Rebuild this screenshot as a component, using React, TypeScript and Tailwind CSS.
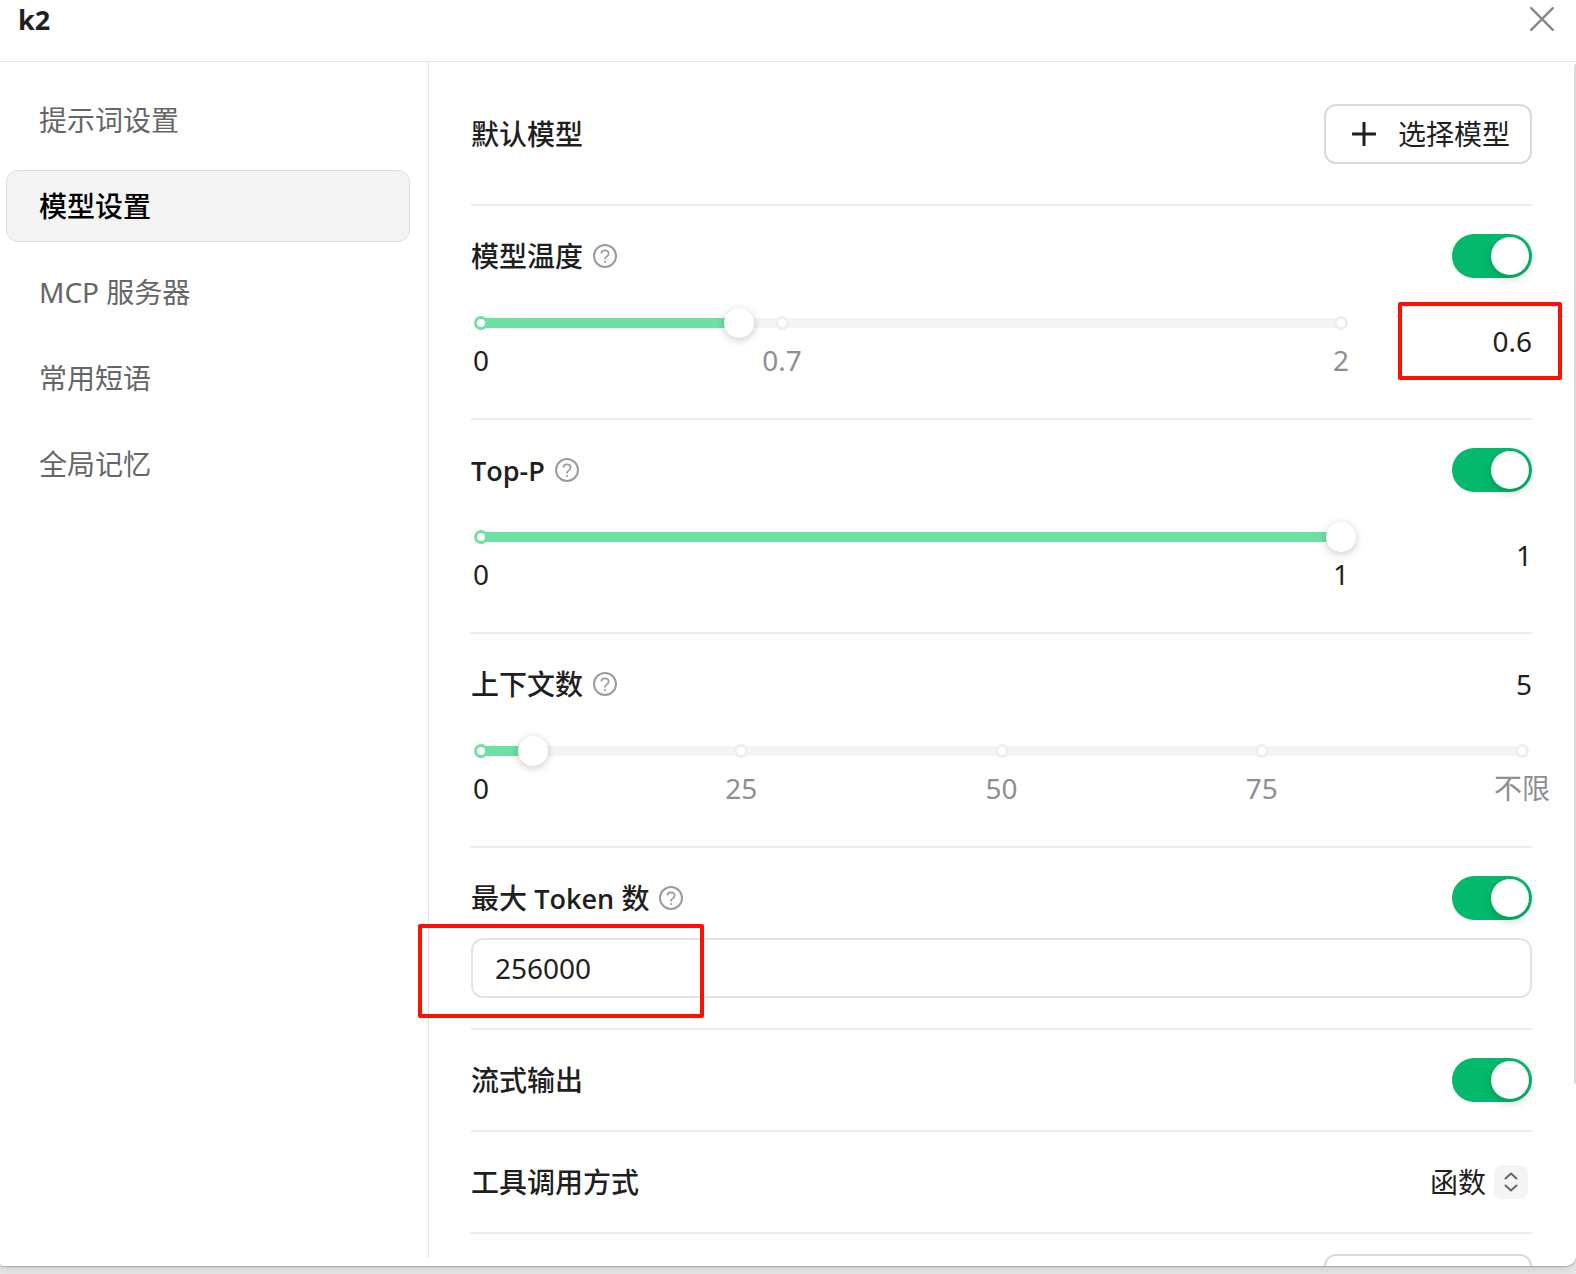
import { useState, type ReactNode } from "react";

const NAV = ["提示词设置", "模型设置", "MCP 服务器", "常用短语", "全局记忆"];

function HelpIcon() {
  return (
    <svg width="24" height="24" viewBox="0 0 24 24" fill="none" stroke="#9b9b9b" aria-hidden="true">
      <circle cx="12" cy="12" r="11" strokeWidth="2" />
      <path d="M8.4 9.6c0-1.9 1.5-3.3 3.6-3.3s3.6 1.3 3.6 3.2c0 1.4-.8 2.2-1.8 2.9-1.2.8-1.8 1.4-1.8 2.7v.4" strokeWidth="1.7" />
      <circle cx="12" cy="18" r="1.1" fill="#9b9b9b" stroke="none" />
    </svg>
  );
}

function Heading({ children, help }: { children: ReactNode; help?: boolean }) {
  return (
    <h2 className="flex h-11 items-center gap-[10px] text-[28px] leading-[44px] font-medium whitespace-nowrap">
      <span>{children}</span>
      {help && <HelpIcon />}
    </h2>
  );
}

function Latin({ children }: { children: ReactNode }) {
  return <span className="font-['Open_Sans',sans-serif] text-[27px] font-semibold">{children}</span>;
}

function Switch({ label }: { label: string }) {
  return (
    <input
      type="checkbox"
      role="switch"
      aria-label={label}
      defaultChecked
      className="relative h-11 w-20 shrink-0 cursor-pointer appearance-none rounded-full bg-gray-300 transition-colors before:absolute before:top-[3px] before:left-[3px] before:size-[38px] before:rounded-full before:bg-white before:shadow-[0_4px_8px_rgba(0,35,11,0.2)] before:transition-transform before:content-[''] checked:bg-[#04b96b] checked:before:translate-x-[36px]"
    />
  );
}

type Mark = { at: number; text: string };

function Slider({
  label,
  value,
  max,
  step,
  marks,
  onChange,
}: {
  label: string;
  value: number;
  max: number;
  step: number;
  marks: Mark[];
  onChange: (v: number) => void;
}) {
  return (
    <div className="h-[66px] flex-1 px-[10px] pt-[10px]">
      <div className="relative h-[10px] bg-[#f4f4f4]">
        <div className="h-full bg-[#6de0a3]" style={{ width: `${(value / max) * 100}%` }} />
        {marks.map((m) => (
          <span
            key={m.at}
            className={`absolute top-1/2 size-[14px] -translate-x-1/2 -translate-y-1/2 rounded-full border-3 bg-white ${
              m.at <= value ? "border-[#6de0a3]" : "border-[#eeeeee]"
            }`}
            style={{ left: `${(m.at / max) * 100}%` }}
          />
        ))}
        {marks.map((m) => (
          <span
            key={m.text}
            className={`absolute top-[22px] -translate-x-1/2 text-[28px] leading-[40px] whitespace-nowrap ${
              m.at <= value ? "text-[#1f1f1f]" : "text-[#8f8f8f]"
            }`}
            style={{ left: `${(m.at / max) * 100}%` }}
          >
            {m.text}
          </span>
        ))}
        <span
          className="absolute top-1/2 size-[30px] -translate-x-1/2 -translate-y-1/2 rounded-full bg-white shadow-[0_2px_8px_rgba(0,0,0,0.22)]"
          style={{ left: `${(value / max) * 100}%` }}
        />
        <input
          type="range"
          aria-label={label}
          min={0}
          max={max}
          step={step}
          value={value}
          onChange={(e) => onChange(Number(e.target.value))}
          className="absolute -inset-x-[15px] -top-[10px] h-[30px] cursor-pointer opacity-0"
        />
      </div>
    </div>
  );
}

function ValueSlider({
  label,
  title,
  initial,
  max,
  marks,
  highlighted,
}: {
  label: string;
  title: ReactNode;
  initial: number;
  max: number;
  marks: Mark[];
  highlighted?: boolean;
}) {
  const [value, setValue] = useState(initial);
  return (
    <section className="border-b-2 border-[#ececec] pt-7 pb-11">
      <div className="flex items-center justify-between">
        <Heading help>{title}</Heading>
        <Switch label={label} />
      </div>
      <div className="mt-[30px] flex">
        <Slider label={label} value={value} max={max} step={0.1} marks={marks} onChange={setValue} />
        <div className="relative flex w-[181px] items-center">
          <input
            type="text"
            inputMode="decimal"
            aria-label={label}
            value={value}
            onChange={(e) => setValue(Number(e.target.value) || 0)}
            className="h-[66px] w-full bg-transparent text-right text-[28px] leading-[40px] outline-none"
          />
          {highlighted && (
            <span className="pointer-events-none absolute -top-[6px] -right-[30px] h-[78px] w-[164px] rounded-[2px] border-4 border-[#ff1000]" />
          )}
        </div>
      </div>
    </section>
  );
}

function ContextSection() {
  const [value, setValue] = useState(5);
  return (
    <section className="border-b-2 border-[#ececec] pt-7 pb-11">
      <div className="flex items-center justify-between">
        <Heading help>上下文数</Heading>
        <span className="text-[28px] leading-[44px]">{value}</span>
      </div>
      <div className="mt-[30px] flex">
        <Slider
          label="上下文数"
          value={value}
          max={100}
          step={1}
          marks={[
            { at: 0, text: "0" },
            { at: 25, text: "25" },
            { at: 50, text: "50" },
            { at: 75, text: "75" },
            { at: 100, text: "不限" },
          ]}
          onChange={setValue}
        />
      </div>
    </section>
  );
}

export default function App() {
  const [active, setActive] = useState("模型设置");
  return (
    <div
      lang="zh-CN"
      className="h-screen overflow-hidden bg-[#e8e8e8] pb-2 font-['Noto_Sans','Noto_Sans_CJK_SC',sans-serif] text-[#1f1f1f]"
    >
      <main className="relative flex h-full flex-col rounded-br-[10px] rounded-bl-[3px] bg-white shadow-[0_1px_1px_rgba(0,0,0,0.2),0_2px_12px_rgba(0,0,0,0.15)]">
        <header className="flex h-[62px] shrink-0 items-start justify-between border-b border-[#e3e3e3] pr-[22px] pl-[18px]">
          <h1 className="text-[27px] leading-[40px] font-bold">k2</h1>
          <button type="button" aria-label="关闭" className="mt-[7px] cursor-pointer">
            <svg width="24" height="24" viewBox="0 0 24 24" stroke="#888888" strokeWidth="2.4" strokeLinecap="round">
              <path d="M1.2 1.2 22.8 22.8M22.8 1.2 1.2 22.8" />
            </svg>
          </button>
        </header>

        <div className="flex min-h-0 flex-1 overflow-hidden">
          <nav className="mb-2 flex w-[429px] shrink-0 flex-col gap-[14px] border-r border-[#e3e3e3] pt-[22px] pr-[18px] pl-[6px]">
            {NAV.map((item) => (
              <button
                key={item}
                type="button"
                onClick={() => setActive(item)}
                className={`h-[72px] cursor-pointer rounded-[12px] border px-8 text-left text-[28px] leading-[40px] ${
                  item === active
                    ? "border-[#dcdcdc] bg-[#f4f4f4] font-medium text-black"
                    : "border-transparent text-[#666666]"
                }`}
              >
                {item}
              </button>
            ))}
          </nav>

          <div className="min-w-0 flex-1 pr-11 pl-[42px]">
            <section className="flex items-center justify-between border-b-2 border-[#ececec] pt-[42px] pb-10">
              <Heading>默认模型</Heading>
              <button
                type="button"
                className="flex h-[60px] w-[208px] cursor-pointer items-center justify-between rounded-[12px] border-2 border-[#d9d9d9] pr-5 pl-[26px] text-[28px] leading-[40px]"
              >
                <svg width="24" height="24" viewBox="0 0 24 24" stroke="#1f1f1f" strokeWidth="3" strokeLinecap="round" aria-hidden="true">
                  <path d="M1 12h22M12 1v22" />
                </svg>
                选择模型
              </button>
            </section>

            <ValueSlider
              label="模型温度"
              title="模型温度"
              initial={0.6}
              max={2}
              highlighted
              marks={[
                { at: 0, text: "0" },
                { at: 0.7, text: "0.7" },
                { at: 2, text: "2" },
              ]}
            />
            <ValueSlider
              label="Top-P"
              title={<Latin>Top-P</Latin>}
              initial={1}
              max={1}
              marks={[
                { at: 0, text: "0" },
                { at: 1, text: "1" },
              ]}
            />
            <ContextSection />

            <section className="border-b-2 border-[#ececec] pt-7 pb-[30px]">
              <div className="flex items-center justify-between">
                <Heading help>
                  最大 <Latin>Token</Latin> 数
                </Heading>
                <Switch label="最大 Token 数" />
              </div>
              <div className="relative mt-[18px]">
                <input
                  type="text"
                  inputMode="numeric"
                  aria-label="最大 Token 数"
                  defaultValue="256000"
                  className="block h-[60px] w-full rounded-[12px] border-2 border-[#e3e3e3] px-[22px] text-[28px] leading-[40px] outline-none"
                />
                <span className="pointer-events-none absolute -top-[14px] -left-[53px] h-[94px] w-[286px] rounded-[2px] border-4 border-[#ff1000]" />
              </div>
            </section>

            <section className="flex items-center justify-between border-b-2 border-[#ececec] py-7">
              <Heading>流式输出</Heading>
              <Switch label="流式输出" />
            </section>

            <section className="flex items-center justify-between border-b-2 border-[#ececec] py-7">
              <Heading>工具调用方式</Heading>
              <div className="flex items-center gap-2 pr-1">
                <select
                  aria-label="工具调用方式"
                  defaultValue="函数"
                  className="w-14 cursor-pointer appearance-none bg-transparent text-[28px] leading-[40px] outline-none"
                >
                  <option>函数</option>
                </select>
                <span className="flex size-[34px] items-center justify-center rounded-[8px] bg-[#f4f4f4]">
                  <svg
                    width="20"
                    height="24"
                    viewBox="0 0 20 24"
                    fill="none"
                    stroke="#666666"
                    strokeWidth="2"
                    strokeLinecap="round"
                    strokeLinejoin="round"
                    aria-hidden="true"
                  >
                    <path d="m4.5 8.5 5.5-5 5.5 5M4.5 15.5l5.5 5 5.5-5" />
                  </svg>
                </span>
              </div>
            </section>

            <section className="flex justify-end pt-5">
              <button
                type="button"
                aria-label="添加参数"
                className="h-[60px] w-[208px] rounded-[12px] border-2 border-[#d9d9d9]"
              />
            </section>
          </div>
        </div>

        <span className="absolute top-16 right-0 h-[1020px] w-[2px] rounded-l-[2px] bg-[#d9d9d9]" />
      </main>
    </div>
  );
}
